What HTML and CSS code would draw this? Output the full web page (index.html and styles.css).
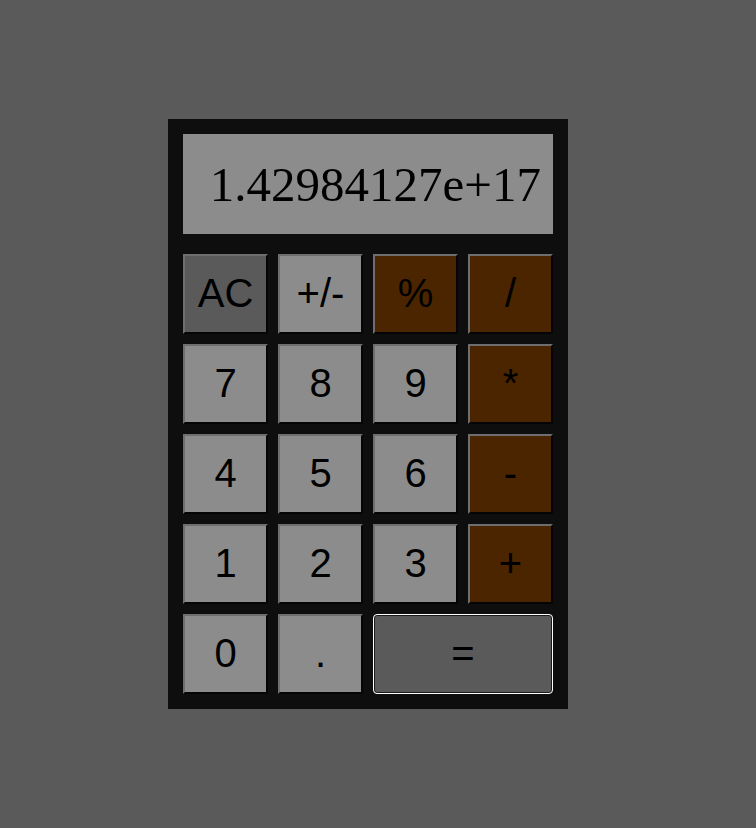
FILE: index.html
```html
<!DOCTYPE html>
<html>
<head>
<meta charset="utf-8">
<link rel="stylesheet" href="styles.css">
</head>
<body>
<div class="calc">
  <div class="display">1.42984127e+17</div>
  <div class="keys">
    <button class="key dark">AC</button>
    <button class="key">+/-</button>
    <button class="key op">%</button>
    <button class="key op">/</button>
    <button class="key">7</button>
    <button class="key">8</button>
    <button class="key">9</button>
    <button class="key op">*</button>
    <button class="key">4</button>
    <button class="key">5</button>
    <button class="key">6</button>
    <button class="key op">-</button>
    <button class="key">1</button>
    <button class="key">2</button>
    <button class="key">3</button>
    <button class="key op">+</button>
    <button class="key">0</button>
    <button class="key">.</button>
    <button class="key equals">=</button>
  </div>
</div>
</body>
</html>
```

FILE: styles.css
```css
html, body {
  margin: 0;
  padding: 0;
  background: #5a5a5a;
}
body {
  display: flex;
  justify-content: flex-start;
  padding-top: 119px;
  padding-left: 168px;
  height: 828px;
  box-sizing: border-box;
}
.calc {
  width: 400px;
  box-sizing: border-box;
  padding: 15px;
  background: #0e0e0e;
  display: flex;
  flex-direction: column;
  gap: 20px;
  align-self: flex-start;
}
.display {
  height: 100px;
  background: #8c8c8c;
  color: #000;
  font-family: "Liberation Serif", "Times New Roman", serif;
  font-size: 49px;
  display: flex;
  align-items: center;
  justify-content: flex-end;
  padding: 0 12px 0 0;
  box-sizing: border-box;
}
.keys {
  display: grid;
  grid-template-columns: repeat(4, 85px);
  grid-auto-rows: 80px;
  gap: 10px;
}
.key {
  margin: 0;
  padding: 0 0 1px 0;
  background: #8c8c8c;
  color: #000;
  font-family: "Liberation Sans", Arial, sans-serif;
  font-size: 40px;
  border-width: 2px;
  border-style: solid;
  border-top-color: #6e6e6e;
  border-left-color: #6e6e6e;
  border-right-color: #050505;
  border-bottom-color: #050505;
}
.key.dark {
  background: #5a5a5a;
}
.key.op {
  background: #4a2500;
}
.key.equals {
  grid-column: span 2;
  background: #5a5a5a;
  border: 1px solid #ffffff;
  border-radius: 4px;
  box-shadow: inset 0 0 0 1px #1a1a1a;
}
```
